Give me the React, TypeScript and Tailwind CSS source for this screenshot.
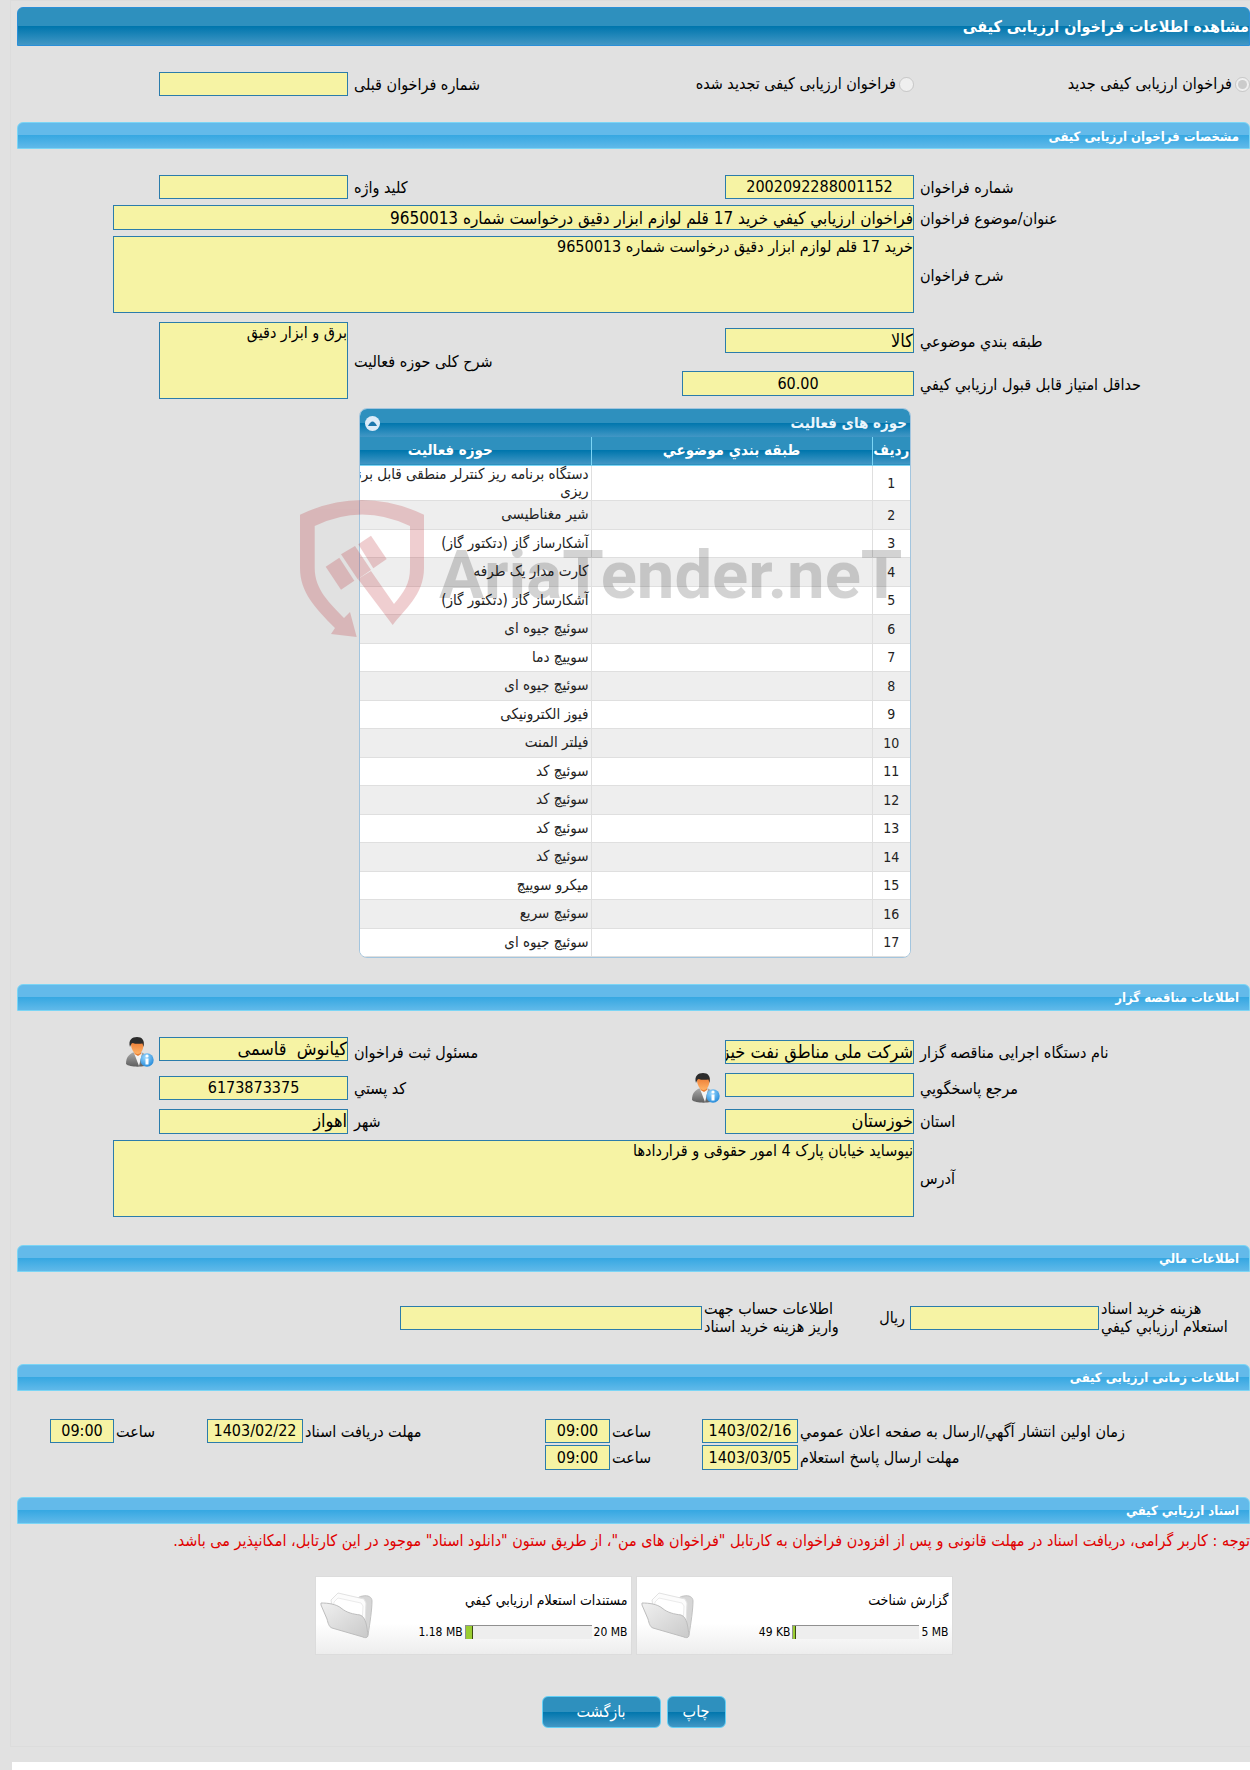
import { useState } from "react";
import type { ReactNode } from "react";

const activities = [
  "دستگاه برنامه ریز کنترلر منطقی قابل برنامه ریزی",
  "شیر مغناطیسی",
  "آشکارساز گاز (دتکتور گاز)",
  "کارت مدار یک طرفه",
  "آشکارساز گاز (دتکتور گاز)",
  "سوئیچ جیوه ای",
  "سوییچ دما",
  "سوئیچ جیوه ای",
  "فیوز الکترونیکی",
  "فیلتر المنت",
  "سوئیچ کد",
  "سوئیچ کد",
  "سوئیچ کد",
  "سوئیچ کد",
  "میکرو سوییچ",
  "سوئیچ سریع",
  "سوئیچ جیوه ای",
];

const darkBar = "bg-[linear-gradient(to_bottom,#2e90be_0%,#2e90be_49%,#0076ad_50%,#4297c5_100%)]";
const lightBar = "bg-[linear-gradient(to_bottom,#63baea_0%,#63baea_49%,#37a8e2_50%,#60b9e9_100%)]";
const box = "block border border-[#2b7cab] bg-[#f6f3a4] text-black outline-none";
const formGrid = "grid grid-cols-[336px_1fr_190px_331px] gap-y-[6px] items-center";

interface FieldProps {
  id: string;
  value?: string;
  center?: boolean;
  size?: string;
  className?: string;
}

const Field = ({ id, value = "", center, size = "text-lg", className = "w-[189px] h-6" }: FieldProps) => (
  <input
    id={id}
    type="text"
    readOnly
    value={value}
    className={`${box} ${center ? "text-center text-base" : `text-right ${size}`} ${className}`}
  />
);

const Area = ({ id, value, className }: { id: string; value: string; className: string }) => (
  <textarea
    id={id}
    readOnly
    value={value}
    className={`${box} h-[77px] resize-none text-base leading-5 ${className}`}
  />
);

const Label = ({ htmlFor, children }: { htmlFor: string; children: ReactNode }) => (
  <label htmlFor={htmlFor} className="pe-[6px] pt-[2px] text-end">
    {children}
  </label>
);

const SectionBar = ({ children }: { children: ReactNode }) => (
  <h2
    className={`${lightBar} flex h-[27px] items-center rounded-t-md border border-[#7bd5f5] px-[10px] pt-[2px] text-[13px] font-bold text-white`}
  >
    {children}
  </h2>
);

const PersonIcon = () => (
  <svg width="28" height="30" viewBox="0 0 28 30" className="block">
    <defs>
      <linearGradient id="suit" x1="0" y1="0" x2="0" y2="1">
        <stop offset="0" stopColor="#a9a9a9" />
        <stop offset="1" stopColor="#5e5e5e" />
      </linearGradient>
      <linearGradient id="face" x1="0" y1="0" x2="0" y2="1">
        <stop offset="0" stopColor="#e8702a" />
        <stop offset="1" stopColor="#ffb367" />
      </linearGradient>
      <radialGradient id="info" cx="0.4" cy="0.3" r="0.8">
        <stop offset="0" stopColor="#9ad8ff" />
        <stop offset="1" stopColor="#1a83d6" />
      </radialGradient>
    </defs>
    <path d="M0 27C0 20 3 17.500 7 15.500H16C20 17.500 23 20 23 27C20 30.500 3 30.500 0 27Z" fill="url(#suit)" />
    <path d="M8 16L13 29L16 16.500Z" fill="#f4f4f4" />
    <path d="M8.500 13H15V17L12 19L8.500 17Z" fill="#e98035" />
    <path d="M5 7C5 3 8 2 12 2C16 2 17.500 3 17.500 7C17.500 12 15.500 17 11.500 17C8 17 5 12 5 7Z" fill="url(#face)" />
    <path d="M4 10C2 3 6 0 11 0C16 0 19 3 17.500 10L16.500 6.500C13 7 9 7 6.500 6C5 6.500 5 8 4 10Z" fill="#2c2c2c" />
    <circle cx="21" cy="23" r="6.700" fill="url(#info)" />
    <rect x="19.500" y="21.500" width="3" height="6" fill="#fff" />
    <circle cx="21" cy="19" r="1.600" fill="#fff" />
  </svg>
);

const FolderIcon = () => (
  <svg width="54" height="48" viewBox="0 0 54 48" className="block">
    <defs>
      <linearGradient id="folder" x1="0" y1="0" x2="1" y2="1">
        <stop offset="0" stopColor="#f0f0f0" />
        <stop offset="1" stopColor="#c9c9c9" />
      </linearGradient>
    </defs>
    <path
      d="M36 8C39 8 40 5 44 5C49 4 53 6 53 10C53 18 51 32 49 44L44 46L30 20Z"
      fill="#d6d6d6"
      stroke="#c2c2c2"
    />
    <path d="M12 9L19 2L45 8L47 12L46 34L14 22Z" fill="#fcfcfc" stroke="#e2e2e2" />
    <path d="M15 11L19 7L42 12L44 15L43 34L14 22Z" fill="#fff" stroke="#ebebeb" />
    <path
      d="M2 12C9 12 17 13 22 17C28 22 34 23 41 24C47 26 48 36 49 45C48 47 46 47 44 46L13 37C10 36 9 32 8 28L2 14Z"
      fill="url(#folder)"
      stroke="#bdbdbd"
    />
  </svg>
);

const Watermark = () => (
  <svg
    width="602"
    height="138"
    viewBox="0 0 602 138"
    className="pointer-events-none absolute -left-[59px] top-[92px]"
  >
    <g fill="#b5121b" opacity="0.2">
      <path d="M0 14.700Q62 -14.700 124 14.700V68C124 95 104 110 92.700 125L58 79L71 71L94 104C104 92 110 84 110 68V26Q62 3 14.700 26V68C14.700 90 30 103 44 118L50 112L56.700 137L31 134L35 128C15 108 0 92 0 68Z" />
      <path d="M25.700 66.700L39.300 57.700L54.300 80.700L41 89.700Z" />
      <path d="M41 54.300L55 46L71 70L57.700 79.300Z" />
      <path d="M58.300 44.300L71 35.700L86.700 59L73.300 68.300Z" />
    </g>
    <text x="139" y="98" direction="ltr" fill="#000" opacity="0.17" className="font-['Roboto'] text-[67px] font-bold">
      AriaTender.neT
    </text>
  </svg>
);

interface DocCardProps {
  title: string;
  used: string;
  total: string;
  percent: number;
}

const DocCard = ({ title, used, total, percent }: DocCardProps) => (
  <div className="flex h-[79px] w-[317px] items-center justify-between border border-[#dcdcdc] bg-[linear-gradient(to_bottom,#fff_0%,#fff_60%,#ededed_100%)] px-[3px] text-xs">
    <div className="flex flex-col gap-[14px]">
      <a href="#" className="text-sm leading-5 text-black">
        {title}
      </a>
      <div className="flex items-center gap-[2px]" dir="ltr">
        <span className="w-[50px] text-right">{used}</span>
        <div className="h-[14px] w-[127px] border-l border-t border-[#909090] bg-[#eee]">
          <div className="h-full border-r border-[#3c4a14] bg-[#9acd32]" style={{ width: `${percent}%` }} />
        </div>
        <span>{total}</span>
      </div>
    </div>
    <FolderIcon />
  </div>
);

export default function App() {
  const [open, setOpen] = useState(true);

  return (
    <div dir="rtl" className="min-h-screen overflow-hidden bg-[#e1e1e1] font-['DejaVu_Sans_Condensed','DejaVu_Sans',sans-serif] text-base leading-[18px] text-black">
      <main className="ml-[10px] border-b border-l border-t border-[#dcdcdc] pb-[18px] pl-[6px] pt-[6px]">
        <h1 className={`${darkBar} flex h-[39px] items-center rounded-t-md border border-[#2a8fd8] text-base font-bold text-white`}>
          مشاهده اطلاعات فراخوان ارزیابی کیفی
        </h1>

        <div className="grid h-[76px] grid-cols-[336px_1fr_190px_331px] items-center">
          <label className="flex items-center gap-[3px]">
            <input type="radio" name="kind" defaultChecked disabled className="size-[15px]" />
            فراخوان ارزیابی کیفی جدید
          </label>
          <label className="flex items-center gap-[3px]">
            <input type="radio" name="kind" disabled className="size-[15px]" />
            فراخوان ارزیابی کیفی تجدید شده
          </label>
          <Label htmlFor="prev">شماره فراخوان قبلی</Label>
          <Field id="prev" />
        </div>

        <SectionBar>مشخصات فراخوان ارزیابی کیفی</SectionBar>
        <div className={`${formGrid} pt-[26px]`}>
          <Label htmlFor="number">شماره فراخوان</Label>
          <Field id="number" value="2002092288001152" center />
          <Label htmlFor="keyword">کلید واژه</Label>
          <Field id="keyword" />
          <Label htmlFor="subject">عنوان/موضوع فراخوان</Label>
          <div className="col-span-3 pl-24">
            <Field
              id="subject"
              value="فراخوان ارزيابي كيفي خرید 17 قلم لوازم ابزار دقیق درخواست شماره 9650013"
              size="text-[17px]"
              className="h-[25px] w-full"
            />
          </div>
          <Label htmlFor="desc">شرح فراخوان</Label>
          <div className="col-span-3 pl-24">
            <Area id="desc" value="خرید 17 قلم لوازم ابزار دقیق درخواست شماره 9650013" className="w-full" />
          </div>
        </div>
        <div className="mt-[9px] flex">
          <div className="grid flex-1 grid-cols-[336px_1fr] items-center gap-y-[18px] pb-[3px] pt-[6px]">
            <Label htmlFor="category">طبقه بندي موضوعي</Label>
            <Field id="category" value="کالا" className="h-[25px] w-[189px]" />
            <Label htmlFor="score">حداقل امتیاز قابل قبول ارزيابي كيفي</Label>
            <Field id="score" value="60.00" center className="h-[25px] w-[232px]" />
          </div>
          <div className="grid grid-cols-[190px_331px] items-center">
            <Label htmlFor="scope">شرح کلی حوزه فعالیت</Label>
            <Area id="scope" value="برق و ابزار دقیق" className="w-[189px]" />
          </div>
        </div>

        <div className="relative mr-[339px] mt-[9px] w-[552px]">
          <div className="overflow-hidden rounded-lg border border-[#a3c5de] bg-white">
            <div className={`${darkBar} flex h-[28px] items-center justify-between pl-[5px] pr-[3px] text-[15px] font-bold text-[#eaf5fc]`}>
              <span>حوزه های فعالیت</span>
              <button
                type="button"
                aria-label="جمع کردن"
                onClick={() => setOpen(!open)}
                className="flex size-[15px] items-center justify-center rounded-full bg-[#dcebf8]"
              >
                <svg width="9" height="5" viewBox="0 0 9 5">
                  <path d="M0 5Q4.500 -4 9 5Z" fill="#1c78ae" />
                </svg>
              </button>
            </div>
            {open && (
              <table className="w-[600px] table-fixed border-collapse text-[15px] leading-[17px] text-[#222]">
                <colgroup>
                  <col className="w-[38px]" />
                  <col className="w-[281px]" />
                  <col className="w-[281px]" />
                </colgroup>
                <thead>
                  <tr className={`${darkBar} h-[28px] border-b border-[#7bd5f5] text-white`}>
                    <th>ردیف</th>
                    <th className="border-r border-[#7bd5f5]">طبقه بندي موضوعي</th>
                    <th className="border-r border-[#7bd5f5]">حوزه فعاليت</th>
                  </tr>
                </thead>
                <tbody>
                  {activities.map((name, i) => (
                    <tr
                      key={i}
                      className="border-b border-[#dfdfdf] odd:h-[28px] odd:bg-white even:h-[29px] even:bg-[#eee]"
                    >
                      <td className="text-center text-sm">{i + 1}</td>
                      <td className="border-r border-[#dfdfdf]" />
                      <td className="border-r border-[#dfdfdf] pl-5 pr-[2px]">{name}</td>
                    </tr>
                  ))}
                </tbody>
              </table>
            )}
          </div>
          <Watermark />
        </div>

        <div className="mt-[26px]">
          <SectionBar>اطلاعات مناقصه گزار</SectionBar>
        </div>
        <div className={`${formGrid} pt-[26px]`}>
          <Label htmlFor="org">نام دستگاه اجرایی مناقصه گزار</Label>
          <Field id="org" value="شرکت ملی مناطق نفت خیز جنوب" />
          <Label htmlFor="registrar">مسئول ثبت فراخوان</Label>
          <div className="flex items-start gap-[5px]">
            <Field id="registrar" value="کیانوش  قاسمی" />
            <button type="button" aria-label="اطلاعات مسئول">
              <PersonIcon />
            </button>
          </div>
          <Label htmlFor="contact">مرجع پاسخگويي</Label>
          <div className="flex items-start gap-[5px]">
            <Field id="contact" />
            <button type="button" aria-label="اطلاعات مرجع">
              <PersonIcon />
            </button>
          </div>
          <Label htmlFor="postal">کد پستي</Label>
          <Field id="postal" value="6173873375" center />
          <Label htmlFor="province">استان</Label>
          <Field id="province" value="خوزستان" className="h-[25px] w-[189px]" />
          <Label htmlFor="city">شهر</Label>
          <Field id="city" value="اهواز" className="h-[25px] w-[189px]" />
          <Label htmlFor="address">آدرس</Label>
          <div className="col-span-3 pl-24">
            <Area id="address" value="نیوساید خیابان پارک 4 امور حقوقی و قراردادها" className="w-full" />
          </div>
        </div>

        <div className="mt-[28px]">
          <SectionBar>اطلاعات مالي</SectionBar>
        </div>
        <div className="flex items-center pt-[28px]">
          <label htmlFor="fee" className="w-[151px] pe-[2px] text-end">
            هزینه خرید اسناد
            <br />
            استعلام ارزيابي كيفي
          </label>
          <Field id="fee" />
          <span className="w-[29px] ps-[5px]">ریال</span>
          <label htmlFor="account" className="w-[179px] pe-[2px] text-end">
            اطلاعات حساب جهت
            <br />
            واریز هزینه خرید اسناد
          </label>
          <Field id="account" className="h-6 w-[302px]" />
        </div>

        <div className="mt-[28px]">
          <SectionBar>اطلاعات زمانی ارزیابی کیفی</SectionBar>
        </div>
        <div className="grid grid-cols-[452px_96px_92px_65px_242px_96px_93px_64px] items-center gap-y-[2px] pt-[28px]">
          <label htmlFor="publish" className="pe-[2px] pt-[2px] text-end">
            زمان اولین انتشار آگهي/ارسال به صفحه اعلان عمومي
          </label>
          <Field id="publish" value="1403/02/16" center className="h-6 w-full" />
          <label htmlFor="publishTime" className="pe-[2px] pt-[2px] text-end">
            ساعت
          </label>
          <Field id="publishTime" value="09:00" center className="h-6 w-full" />
          <label htmlFor="receive" className="pe-[2px] pt-[2px] text-end">
            مهلت دریافت اسناد
          </label>
          <Field id="receive" value="1403/02/22" center className="h-6 w-full" />
          <label htmlFor="receiveTime" className="pe-[2px] pt-[2px] text-end">
            ساعت
          </label>
          <Field id="receiveTime" value="09:00" center className="h-6 w-full" />
          <label htmlFor="reply" className="pe-[2px] pt-[2px] text-end">
            مهلت ارسال پاسخ استعلام
          </label>
          <Field id="reply" value="1403/03/05" center className="h-[25px] w-full" />
          <label htmlFor="replyTime" className="pe-[2px] pt-[2px] text-end">
            ساعت
          </label>
          <Field id="replyTime" value="09:00" center className="h-[25px] w-full" />
        </div>

        <div className="mt-[27px]">
          <SectionBar>اسناد ارزيابي كيفي</SectionBar>
        </div>
        <p className="flex h-[34px] items-center whitespace-nowrap text-[#e00000]">
          توجه : کاربر گرامی، دریافت اسناد در مهلت قانونی و پس از افزودن فراخوان به کارتابل "فراخوان های من"، از طریق ستون "دانلود اسناد" موجود در این کارتابل، امکانپذیر می باشد.
        </p>
        <div className="mt-[18px] flex justify-center gap-1">
          <DocCard title="گزارش شناخت" used="49 KB" total="5 MB" percent={2} />
          <DocCard title="مستندات استعلام ارزيابي كيفي" used="1.18 MB" total="20 MB" percent={6} />
        </div>
        <div className="mt-[41px] flex justify-center gap-[6px] text-white">
          <button type="button" className={`${darkBar} h-8 w-[59px] rounded-md border border-[#63cff5]`}>
            چاپ
          </button>
          <button type="button" className={`${darkBar} h-8 w-[119px] rounded-md border border-[#63cff5]`}>
            بازگشت
          </button>
        </div>
      </main>
      <div className="ml-[12px] mt-[15px] h-2 bg-white" />
    </div>
  );
}
